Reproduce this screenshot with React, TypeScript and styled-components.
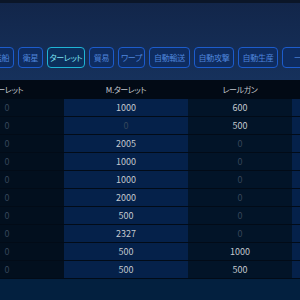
import styled, { createGlobalStyle } from 'styled-components';

const GlobalStyle = createGlobalStyle`
  html, body {
    margin: 0;
    padding: 0;
    background: #03203f;
  }
  body {
    font-family: "Noto Sans CJK JP", "Noto Sans", sans-serif;
    font-feature-settings: "palt";
  }
`;

// tab labels with the width each button takes in the bar
const tabs: [string, number][] = [
  ['艦船', 25],
  ['衛星', 25],
  ['ターレット', 38],
  ['貿易', 25],
  ['ワープ', 27],
  ['自動輸送', 41],
  ['自動攻撃', 40],
  ['自動生産', 40],
  ['一括', 40],
];

const rows: [number, number, number][] = [
  [0, 1000, 600],
  [0, 0, 500],
  [0, 2005, 0],
  [0, 1000, 0],
  [0, 1000, 0],
  [0, 2000, 0],
  [0, 500, 0],
  [0, 2327, 0],
  [0, 500, 1000],
  [0, 500, 500],
];

function App() {
  return (
    <>
      <GlobalStyle />
      <Page>
        <TopPanel>
          <TabBar>
            {tabs.map(([t, w]) => (
              <Tab key={t} $w={w} $active={t === 'ターレット'}>
                {t}
              </Tab>
            ))}
          </TabBar>
        </TopPanel>
        <TableWrap>
          <Table>
            <colgroup>
              <col style={{ width: 114 }} />
              <col style={{ width: 124 }} />
              <col style={{ width: 104 }} />
              <col style={{ width: 60 }} />
            </colgroup>
            <thead>
              <tr>
                <Th>ターレット</Th>
                <Th>M.ターレット</Th>
                <Th>レールガン</Th>
                <Th />
              </tr>
            </thead>
            <tbody>
              {rows.map((r, i) => (
                <tr key={i}>
                  {r.map((v, j) => (
                    <Td key={j} $col={j} $zero={v === 0}>
                      {v}
                    </Td>
                  ))}
                  <Td $col={3} $zero />
                </tr>
              ))}
            </tbody>
          </Table>
        </TableWrap>
      </Page>
    </>
  );
}

const Page = styled.div`
  width: 300px;
  height: 300px;
  overflow: hidden;
  display: flex;
  flex-direction: column;
  background: #03203f;
`;

const TopPanel = styled.div`
  height: 80px;
  flex-shrink: 0;
  box-sizing: border-box;
  border-top: 3px solid #0b1628;
  background: linear-gradient(#12264a, #16315c);
  display: flex;
  flex-direction: column;
  justify-content: flex-end;
  padding-bottom: 12px;
`;

const TabBar = styled.div`
  display: flex;
  gap: 4px;
  margin-left: -11px;
  white-space: nowrap;
`;

const Tab = styled.div<{ $active?: boolean; $w: number }>`
  flex-shrink: 0;
  width: ${(p) => p.$w}px;
  height: 21px;
  box-sizing: border-box;
  display: flex;
  align-items: center;
  justify-content: center;
  font-size: 8px;
  letter-spacing: -0.3px;
  border-radius: 4px;
  border: 1px solid ${(p) => (p.$active ? '#1fb4d6' : '#1c5ccc')};
  background: ${(p) => (p.$active ? '#0c2f5c' : '#0e2c60')};
  color: ${(p) => (p.$active ? '#7fe4f4' : '#4f86dc')};
  overflow: hidden;
`;

const TableWrap = styled.div`
  margin-left: -50px;
`;

const Table = styled.table`
  border-collapse: collapse;
  table-layout: fixed;
  width: 402px;
`;

const Th = styled.th`
  height: 19px;
  padding: 0;
  background: #020a15;
  color: #c2c8ce;
  font-size: 8px;
  letter-spacing: -0.4px;
  font-weight: normal;
  text-align: center;
`;

const colBg = ['#020f1e', '#05214a', '#021428', '#05214a'];

const Td = styled.td<{ $col: number; $zero?: boolean }>`
  height: 17px;
  padding: 0;
  border-bottom: 1px solid #020b17;
  background: ${(p) => colBg[p.$col]};
  color: ${(p) => (p.$zero ? '#36465a' : '#c4c9cf')};
  font-size: 9px;
  text-align: center;
`;

export default App;
